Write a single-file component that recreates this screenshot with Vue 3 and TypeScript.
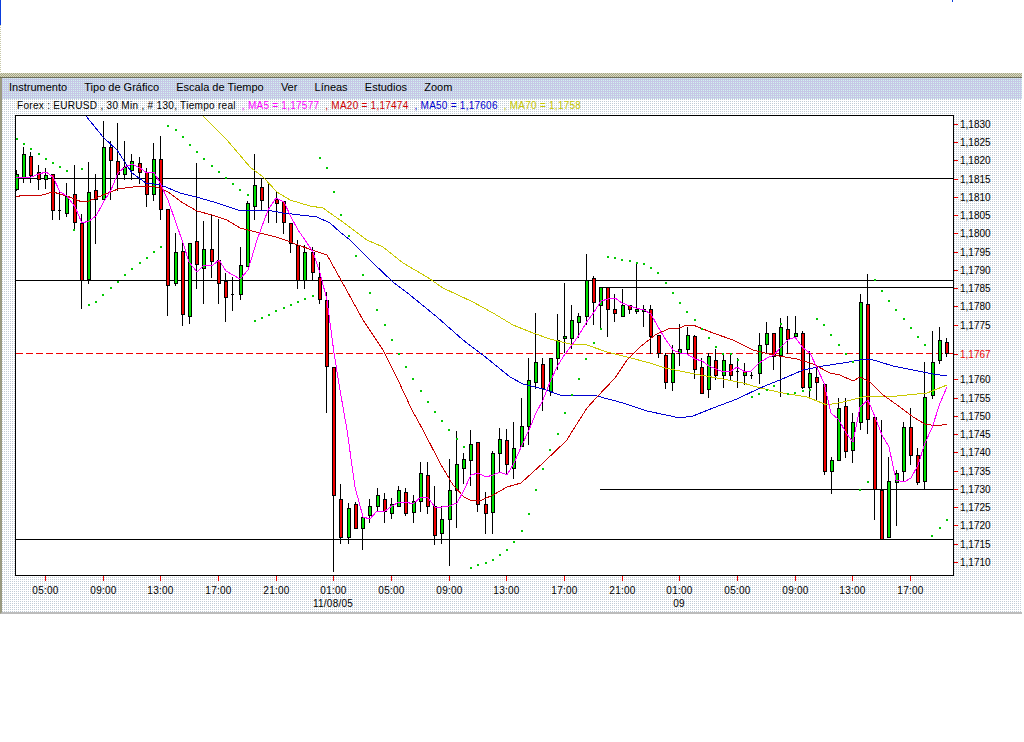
<script setup lang="ts">
type Candle = [number, number, number, number, number];

const menu: string[] = ['Instrumento', 'Tipo de Gráfico', 'Escala de Tiempo', 'Ver', 'Líneas', 'Estudios', 'Zoom'];

const legend: { text: string; cls: string }[] = [
  { text: ', MA5 = 1,17577', cls: 'ma5' },
  { text: ', MA20 = 1,17474', cls: 'ma20' },
  { text: ', MA50 = 1,17606', cls: 'ma50' },
  { text: ', MA70 = 1,1758', cls: 'ma70' }
];

// high, body top, body bottom, low, colour (1 = up/green, 0 = down/red) in screen pixels
const raw: Candle[] = [
  [170,174,189,190,1],[147,154,177,182,1],[152,156,175,182,0],[165,172,179,189,0],[168,175,179,188,1],
  [174,174,210,219,0],[192,210,210,219,0],[183,196,213,216,1],[165,194,222,230,0],[214,223,280,308,0],
  [162,192,279,283,1],[174,190,199,243,0],[121,147,199,199,1],[141,147,160,199,0],[123,161,174,190,0],
  [141,167,174,179,1],[154,161,170,179,1],[157,163,172,183,0],[168,172,194,206,0],[143,159,194,200,1],
  [136,159,209,219,0],[209,209,285,315,0],[233,252,283,285,1],[240,251,314,325,0],[243,243,316,323,1],
  [163,241,264,288,0],[221,249,268,303,1],[214,249,261,277,0],[219,260,283,303,0],[273,281,297,321,0],
  [277,294,294,310,0],[247,265,294,299,1],[201,203,266,266,1],[154,185,206,219,1],[178,187,200,210,0],
  [183,210,210,222,0],[192,199,203,222,0],[201,201,222,233,0],[223,223,243,252,0],[240,245,280,288,0],
  [245,252,280,288,1],[247,252,272,279,0],[262,277,299,303,0],[292,300,366,412,0],[367,367,495,571,0],
  [484,499,537,543,0],[503,508,537,543,1],[502,504,528,528,0],[513,517,528,549,1],[499,506,515,522,1],
  [488,495,506,511,1],[493,499,511,522,0],[498,504,513,518,1],[486,490,506,506,1],[488,492,513,515,0],
  [495,501,512,522,1],[462,473,501,511,1],[462,475,506,513,0],[486,506,535,544,0],[506,519,533,543,1],
  [459,490,519,565,1],[431,464,490,527,1],[453,459,468,483,1],[430,444,460,485,1],[442,442,504,511,0],
  [492,504,513,533,0],[451,453,512,533,1],[428,439,453,472,1],[429,440,464,473,0],[422,448,468,478,1],
  [398,426,446,446,1],[358,380,426,444,1],[313,362,382,388,1],[358,364,388,410,0],[358,358,391,395,1],
  [314,340,358,369,1],[283,336,338,352,1],[305,320,338,348,1],[313,316,322,337,1],[254,280,316,324,1],
  [276,278,302,324,0],[287,287,305,329,1],[287,287,309,336,0],[294,309,313,321,0],[289,305,316,316,1],
  [305,305,309,313,0],[262,309,311,313,1],[305,309,311,326,1],[305,309,336,353,0],[335,335,353,357,0],
  [353,355,382,388,0],[345,353,382,390,1],[324,349,353,365,1],[327,335,349,353,1],[335,336,369,378,0],
  [358,367,393,393,0],[353,356,389,397,1],[349,360,375,379,0],[353,360,375,387,1],[353,364,375,379,0],
  [358,371,371,387,0],[363,371,375,384,0],[372,375,375,378,0],[333,345,373,383,1],[322,333,344,353,1],
  [333,333,356,369,0],[318,327,355,396,1],[316,329,339,353,0],[316,333,336,336,1],[331,333,387,388,0],
  [351,373,387,398,1],[367,377,382,399,0],[384,384,471,474,0],[457,460,471,493,1],[398,408,460,460,1],
  [398,406,451,457,0],[413,422,450,462,1],[294,302,422,429,1],[274,304,419,433,0],[417,417,489,519,0],
  [420,490,539,539,0],[457,481,537,537,1],[470,473,482,525,1],[422,427,471,480,1],[408,427,455,464,0],
  [448,455,482,484,0],[362,397,481,489,1],[331,362,395,398,1],[327,340,360,363,1],[338,342,353,356,0]
];

const candles = raw.map((c, i) => ({
  x: Math.floor(16.5 + 7.21 * i),
  high: c[0],
  top: c[1],
  bottom: c[2],
  low: c[3],
  up: c[4] === 1,
  doji: c[1] === c[2]
}));

const ma5 = '16,178 23,177 31,177 39,174 46,172 53,177 60,192 67,196 75,207 82,223 89,221 96,216 103,203 111,190 118,173 125,167 132,164 140,168 147,173 154,172 161,185 168,200 176,223 183,243 189,262 197,272 204,265 212,266 219,260 226,271 233,275 240,279 248,270 257,240 268,210 276,198 284,202 291,217 298,230 305,240 313,252 320,273 327,300 334,353 340,390 347,430 355,487 363,517 370,519 377,511 385,511 392,506 399,502 406,502 413,504 421,497 428,498 435,507 442,507 449,506 457,503 464,490 471,475 478,473 486,477 493,475 500,472 507,475 514,463 522,445 529,430 536,413 543,400 550,382 558,365 565,354 572,345 579,335 586,323 594,312 601,301 608,299 615,298 622,303 630,306 636,308 644,310 651,314 658,327 666,340 673,350 680,353 687,354 695,359 702,361 709,366 716,369 723,372 731,371 737,367 745,372 751,371 759,363 767,358 774,355 781,347 788,340 795,337 803,348 810,353 817,368 824,383 831,413 839,420 846,433 853,442 860,407 868,400 875,417 882,435 889,447 896,480 904,482 911,478 918,465 925,443 932,428 940,403 947,387';
const ma20 = '16,197 23,195 42,195 53,192 67,196 82,202 89,201 103,195 118,189 140,186 154,186 168,192 183,203 197,211 212,215 227,220 240,228 260,233 276,237 285,240 298,245 312,250 327,255 341,280 363,320 383,350 398,380 412,410 423,430 440,463 453,485 464,497 472,501 482,500 493,495 507,487 521,483 543,463 567,440 573,430 587,408 597,397 615,378 627,360 640,347 655,335 668,329 679,328 687,325 693,325 713,333 733,340 753,350 773,355 797,359 813,364 830,373 840,375 853,381 860,377 870,382 883,395 900,407 913,417 925,424 937,426 947,424';
const ma50 = '86,116 103,137 117,150 132,173 146,183 161,185 180,193 200,198 217,203 238,210 267,210 283,213 300,215 317,217 330,223 340,232 350,240 373,263 393,282 410,295 437,317 463,340 483,355 510,377 523,384 543,389 560,395 597,396 623,403 647,411 680,418 693,416 713,408 737,399 760,388 787,377 803,370 823,366 843,363 860,360 870,359 893,366 913,370 933,374 947,376';
const ma70 = '203,116 227,140 250,167 263,177 277,192 290,200 310,206 323,208 340,220 367,240 383,247 403,263 427,277 443,288 473,302 493,313 513,325 533,333 550,339 570,344 587,345 607,352 627,357 650,363 665,368 680,371 700,375 723,379 743,383 760,388 783,393 807,397 827,405 843,402 867,396 887,397 907,395 927,393 947,385';

const dotData = '16,138 23,143 30,148 38,153 45,158 52,162 59,166 66,170 81,168 73,229 88,304 95,301 102,294 110,287 117,281 124,274 131,268 139,262 146,257 153,251 160,246 167,125 175,129 182,136 189,144 196,151 203,158 211,165 218,171 225,177 232,183 239,189 247,194 254,320 261,317 268,314 275,310 283,307 290,304 297,301 304,298 312,295 319,157 326,167 333,191 340,214 348,235 355,255 362,274 369,292 376,309 384,324 391,339 398,353 405,366 412,378 420,390 427,401 434,411 441,420 448,429 456,438 463,446 470,567 477,564 485,562 492,559 499,554 506,549 513,541 521,530 528,513 535,489 542,468 549,449 557,433 564,412 571,394 578,378 585,358 593,342 600,328 607,256 614,257 621,259 629,260 636,262 643,263 650,267 657,272 665,282 672,292 679,302 686,311 694,319 701,328 708,337 715,346 722,353 730,353 737,359 744,373 751,396 758,393 766,389 773,385 780,323 787,393 794,392 802,390 809,389 816,318 823,324 830,334 838,344 845,353 852,361 859,489 867,481 874,279 881,290 888,300 895,309 903,318 910,327 917,336 924,344 931,535 939,527 946,519';
const dots = dotData.split(' ').map((p) => p.split(',').map(Number));

const priceTicks: { y: number; label: string; last?: boolean }[] = [
  { y: 124, label: '1,1830' }, { y: 142, label: '1,1825' }, { y: 160, label: '1,1820' },
  { y: 179, label: '1,1815' }, { y: 197, label: '1,1810' }, { y: 215, label: '1,1805' },
  { y: 233, label: '1,1800' }, { y: 252, label: '1,1795' }, { y: 270, label: '1,1790' },
  { y: 288, label: '1,1785' }, { y: 306, label: '1,1780' }, { y: 325, label: '1,1775' },
  { y: 354, label: '1,1767', last: true }, { y: 379, label: '1,1760' }, { y: 398, label: '1,1755' },
  { y: 416, label: '1,1750' }, { y: 434, label: '1,1745' }, { y: 452, label: '1,1740' },
  { y: 471, label: '1,1735' }, { y: 489, label: '1,1730' }, { y: 507, label: '1,1725' },
  { y: 525, label: '1,1720' }, { y: 544, label: '1,1715' }, { y: 562, label: '1,1710' }
];

const hours = ['05:00', '09:00', '13:00', '17:00', '21:00', '01:00'];
const timeTicks = Array.from({ length: 16 }, (_, i) => ({
  x: Math.round(45 + 57.67 * i),
  label: hours[i % 6]
}));
</script>

<template>
  <div class="page">
    <span class="mark mark-left"></span>
    <span class="mark mark-right"></span>
    <span class="edge"></span>
    <section class="window">
      <nav class="menu">
        <span v-for="item in menu" :key="item">{{ item }}</span>
      </nav>
      <div class="legend">
        <span class="title">Forex : EURUSD , 30 Min , # 130, Tiempo real</span>
        <span v-for="l in legend" :key="l.cls" :class="l.cls">{{ l.text }}</span>
      </div>
      <svg class="chart" width="1022" height="499" viewBox="0 113 1022 499">
        <rect x="15.5" y="115.5" width="938" height="460" fill="#fff" stroke="#000" shape-rendering="crispEdges" />
        <g stroke="#000" shape-rendering="crispEdges">
          <line x1="16" x2="953" y1="178.5" y2="178.5" />
          <line x1="16" x2="953" y1="280.5" y2="280.5" />
          <line x1="600" x2="953" y1="287.5" y2="287.5" />
          <line x1="600" x2="953" y1="489.5" y2="489.5" />
          <line x1="16" x2="953" y1="539.5" y2="539.5" />
        </g>
        <line x1="16" x2="953" y1="353.5" y2="353.5" stroke="#f00000" stroke-dasharray="7 3" shape-rendering="crispEdges" />

        <g shape-rendering="crispEdges">
          <g v-for="(c, i) in candles" :key="i">
            <rect :x="c.x" :y="c.high" width="1" :height="c.low - c.high + 1" fill="#000" />
            <rect v-if="c.doji" :x="c.x - 1" :y="c.top" width="3" height="1" fill="#000" />
            <rect
              v-else
              :x="c.x - 0.5"
              :y="c.top + 0.5"
              width="3"
              :height="c.bottom - c.top"
              :fill="c.up ? '#00e000' : '#f00000'"
              stroke="#000"
            />
          </g>
        </g>

        <g fill="none" shape-rendering="crispEdges">
          <polyline :points="ma70" stroke="#c8c800" />
          <polyline :points="ma50" stroke="#0000d0" />
          <polyline :points="ma20" stroke="#c80000" />
          <polyline :points="ma5" stroke="#ff00ff" />
        </g>

        <g fill="#00c800" shape-rendering="crispEdges">
          <rect v-for="(d, i) in dots" :key="i" :x="d[0]" :y="d[1]" width="2" height="2" />
        </g>

        <g v-for="t in priceTicks" :key="t.label">
          <rect x="954" :y="t.y" width="4" height="1" fill="#f00000" shape-rendering="crispEdges" />
          <text x="960" :y="t.y + 4" class="axis" :class="{ current: t.last }">{{ t.label }}</text>
        </g>

        <g v-for="t in timeTicks" :key="t.x">
          <rect :x="t.x" y="576" width="1" height="5" fill="#f00000" shape-rendering="crispEdges" />
          <text :x="t.x + 0.5" y="594" class="axis time">{{ t.label }}</text>
        </g>
        <text x="333" y="607" class="axis time">11/08/05</text>
        <text x="679" y="607" class="axis time">09</text>
      </svg>
    </section>
  </div>
</template>

<style>
html,
body {
  margin: 0;
  background: #fff;
}
</style>

<style scoped>
.page {
  position: relative;
  width: 1024px;
  height: 742px;
  background: #fff;
  overflow: hidden;
  padding-top: 73px;
  box-sizing: border-box;
  font-family: "Liberation Sans", Arial, sans-serif;
}
.mark {
  position: absolute;
  top: 0;
  background: #0a3cdc;
}
.mark-left {
  left: 0;
  width: 1px;
  height: 25px;
}
.mark-right {
  left: 952px;
  width: 1px;
  height: 2px;
}
.edge {
  position: absolute;
  left: 0;
  top: 25px;
  width: 1px;
  height: 48px;
  background: repeating-linear-gradient(180deg, #c8c8a8 0 1px, #fff 1px 2px);
}
.window {
  width: 1022px;
  height: 541px;
  display: flex;
  flex-direction: column;
  box-sizing: border-box;
  border-left: 2px solid #9a9a80;
  background-color: #fff;
  background-image: conic-gradient(#fff 75%, #c2ccd6 0);
  background-size: 2px 2px;
  border-bottom: 2px solid #bcbcbc;
}
.window::before {
  content: "";
  display: block;
  height: 4px;
  flex: none;
  margin-left: -2px;
  border-bottom: 1px solid #6e6e5c;
  background-color: #d8d8c4;
  background-image: repeating-conic-gradient(#a6a684 0 25%, #d8d8c4 0 50%);
  background-size: 2px 2px;
}
.menu {
  height: 21px;
  flex: none;
  display: flex;
  align-items: center;
  gap: 17.2px;
  padding: 0 0 3px 7px;
  box-sizing: border-box;
  font-size: 11px;
  color: #000;
  background-color: #c6c8e6;
  background-image: conic-gradient(#d2f2ee 25%, #c6c8e6 0);
  background-size: 2px 2px;
}
.legend {
  height: 14px;
  flex: none;
  display: flex;
  align-items: center;
  gap: 6px;
  padding: 0 0 2px 15px;
  box-sizing: border-box;
  font-size: 10px;
  letter-spacing: 0.25px;
  white-space: nowrap;
}
.title {
  color: #000;
  letter-spacing: 0.3px;
}
.ma5 {
  color: #ff00ff;
}
.ma20 {
  color: #d00000;
}
.ma50 {
  color: #0000d0;
}
.ma70 {
  color: #c8c800;
}
.chart {
  display: block;
  flex: none;
  margin-left: -2px;
  overflow: hidden;
}
.axis {
  font-family: "Liberation Sans", Arial, sans-serif;
  font-size: 10px;
  fill: #000;
}
.axis.current {
  fill: #f00000;
}
.time {
  text-anchor: middle;
  letter-spacing: 0.25px;
}
</style>
